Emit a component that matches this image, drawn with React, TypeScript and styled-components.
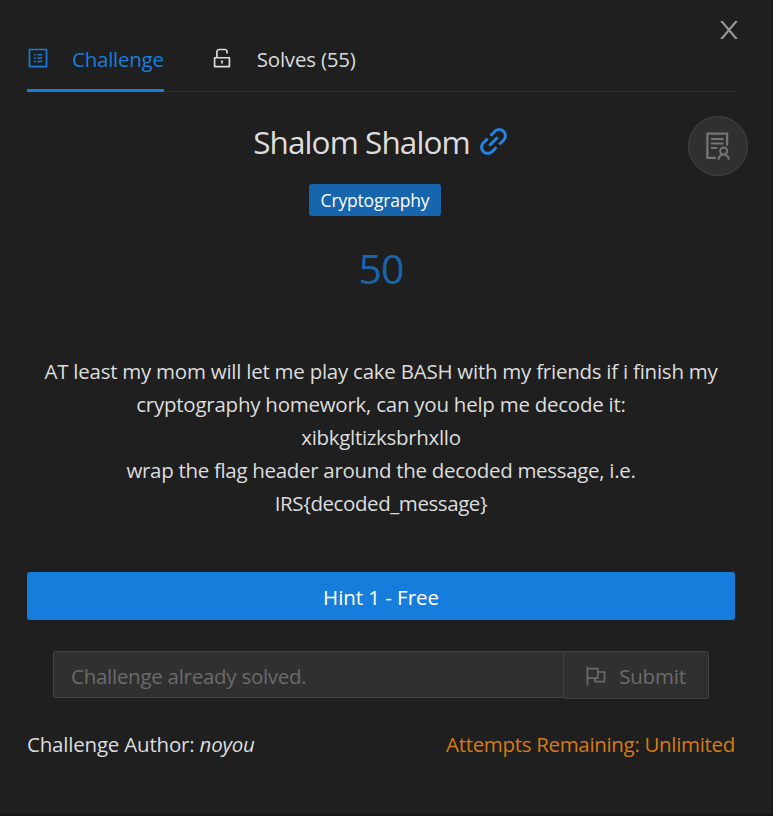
import React from 'react';
import styled, { createGlobalStyle } from 'styled-components';
import {
  AiOutlineFlag,
  AiOutlineLink,
  AiOutlineProfile,
  AiOutlineSolution,
  AiOutlineUnlock,
} from 'react-icons/ai';

const GlobalStyle = createGlobalStyle`
  * { box-sizing: border-box; }
  body { margin: 0; background: #1f1f1f; }
  button, input { font: inherit; margin: 0; }
`;

const Modal = styled.main`
  position: relative;
  height: 816px;
  padding: 28px 37px 0 27px;
  background: #1f1f1f;
  border-right: 1px solid #12121a;
  border-bottom: 2px solid #171717;
  overflow: hidden;
  color: #dddddd;
  font-family: 'Open Sans', 'Noto Sans', sans-serif;
  font-size: 20.5px;
  line-height: 33px;
`;

const Text = styled.span<{ $track?: number }>`
  letter-spacing: ${({ $track = 0 }) => $track}px;
  white-space: nowrap;
`;

const CloseButton = styled.button`
  position: absolute;
  top: 16px;
  right: 29px;
  display: flex;
  padding: 0;
  border: 0;
  background: none;
  color: #959595;
  svg { width: 28px; height: 28px; }
`;

const Tabs = styled.nav`
  display: flex;
  gap: 48px;
  width: 708px;
  height: 64px;
  border-bottom: 1px solid #303030;
`;

const Tab = styled.button<{ $active?: boolean }>`
  display: flex;
  align-items: center;
  gap: 24px;
  height: 64px;
  padding: 0 0 1px;
  border: 0;
  border-bottom: 3px solid ${({ $active }) => ($active ? '#177ddc' : 'transparent')};
  background: none;
  color: ${({ $active }) => ($active ? '#177ddc' : '#dddddd')};
  svg { width: 24px; height: 24px; margin: 0 -1.5px; }
  span { padding-top: 2px; }
`;

const Content = styled.section`
  display: flex;
  flex-direction: column;
  align-items: center;
  width: 708px;
`;

const TitleRow = styled.header`
  display: flex;
  align-items: center;
  gap: 6px;
  height: 50px;
  margin-top: 24px;
  padding-left: 2px;
`;

const Title = styled.h1`
  margin: 0;
  font-size: 31.5px;
  font-weight: 400;
  letter-spacing: -0.93px;
`;

const TitleLink = styled.a`
  display: flex;
  color: #2386e8;
  font-size: 35px;
  svg { stroke: currentColor; stroke-width: 14px; }
`;

const NotesButton = styled.button`
  position: absolute;
  top: 116px;
  right: 24px;
  display: grid;
  place-items: center;
  width: 60px;
  height: 60px;
  padding: 0;
  border: 1px solid #434343;
  border-radius: 50%;
  background: #303030;
  color: #747474;
  font-size: 32px;
`;

const Tag = styled.span`
  display: flex;
  align-items: center;
  justify-content: center;
  width: 132px;
  height: 32px;
  margin: 18px 12px 0 0;
  border-radius: 3px;
  background: #1765ad;
  color: #fff;
  font-size: 17.5px;
`;

const Points = styled.h2`
  margin: 19px 0 1px;
  color: #1765ad;
  font-size: 41px;
  font-weight: 400;
  line-height: 66px;
  letter-spacing: -1px;
`;

const Description = styled.p`
  display: flex;
  flex-direction: column;
  align-items: center;
  margin: 53px 0 0;
`;

const HintButton = styled.button`
  width: 708px;
  height: 48px;
  margin-top: 52px;
  padding: 2px 0 0;
  border: 0;
  border-radius: 3px;
  background: #177ddc;
  color: #fff;
`;

const AnswerForm = styled.form`
  display: flex;
  width: 656px;
  margin-top: 31px;
`;

const AnswerField = styled.input`
  flex: 1;
  min-width: 0;
  height: 47px;
  padding: 3px 17px 0;
  border: 1px solid #434343;
  border-radius: 3px 0 0 3px;
  background: #303030;
  letter-spacing: -0.27px;
  &::placeholder { color: #6b6b6b; opacity: 1; }
`;

const SubmitButton = styled.button`
  display: flex;
  align-items: center;
  justify-content: center;
  gap: 13px;
  width: 146px;
  height: 48px;
  margin-left: -1px;
  padding: 2px 1px 0 0;
  border: 1px solid #434343;
  border-radius: 3px;
  background: #303030;
  color: #6b6b6b;
  svg { width: 24px; height: 24px; margin: 0 -1.5px; }
`;

const Footer = styled.footer`
  display: flex;
  justify-content: space-between;
  width: 708px;
  margin-top: 29px;
`;

const Attempts = styled(Text)`
  color: #d87a16;
`;

/* Tall, narrow cross used by the dialog's close button. */
const CloseIcon = () => (
  <svg viewBox="0 0 1024 1024" fill="currentColor">
    <path d="M563.8 512l262.5-312.9c4.4-5.2.7-13.1-6.1-13.1h-79.8c-4.7 0-9.2 2.1-12.3 5.7L511.6 449.8 295.1 191.7c-3-3.6-7.5-5.7-12.3-5.7H203c-6.8 0-10.5 7.9-6.1 13.1L459.4 512 196.9 824.9A7.95 7.95 0 00203 838h79.8c4.7 0 9.2-2.1 12.3-5.7l216.5-258.1 216.5 258.1c3 3.6 7.5 5.7 12.3 5.7h79.8c6.8 0 10.5-7.9 6.1-13.1L563.8 512z" />
  </svg>
);

const description: [string, number][] = [
  ['AT least my mom will let me play cake BASH with my friends if i finish my', -0.248],
  ['cryptography homework, can you help me decode it:', -0.25],
  ['xibkgltizksbrhxllo', -0.32],
  ['wrap the flag header around the decoded message, i.e.', -0.31],
  ['IRS{decoded_message}', -0.42],
];

export default function App() {
  return (
    <>
      <GlobalStyle />
      <Modal>
        <CloseButton aria-label="Close"><CloseIcon /></CloseButton>
        <Tabs>
          <Tab $active><AiOutlineProfile /><Text $track={-0.25}>Challenge</Text></Tab>
          <Tab><AiOutlineUnlock /><Text $track={-0.2}>Solves (55)</Text></Tab>
        </Tabs>
        <NotesButton aria-label="Writeups"><AiOutlineSolution /></NotesButton>
        <Content>
          <TitleRow>
            <Title>Shalom Shalom</Title>
            <TitleLink aria-label="Link"><AiOutlineLink /></TitleLink>
          </TitleRow>
          <Tag><Text $track={-0.18}>Cryptography</Text></Tag>
          <Points>50</Points>
          <Description>
            {description.map(([line, track]) => <Text key={line} $track={track}>{line}</Text>)}
          </Description>
          <HintButton><Text $track={-0.05}>Hint 1 - Free</Text></HintButton>
          <AnswerForm>
            <AnswerField placeholder="Challenge already solved." disabled />
            <SubmitButton type="button" disabled><AiOutlineFlag /><Text $track={-0.2}>Submit</Text></SubmitButton>
          </AnswerForm>
          <Footer>
            <Text $track={-0.2}>Challenge Author: <em>noyou</em></Text>
            <Attempts $track={-0.32}>Attempts Remaining: Unlimited</Attempts>
          </Footer>
        </Content>
      </Modal>
    </>
  );
}
